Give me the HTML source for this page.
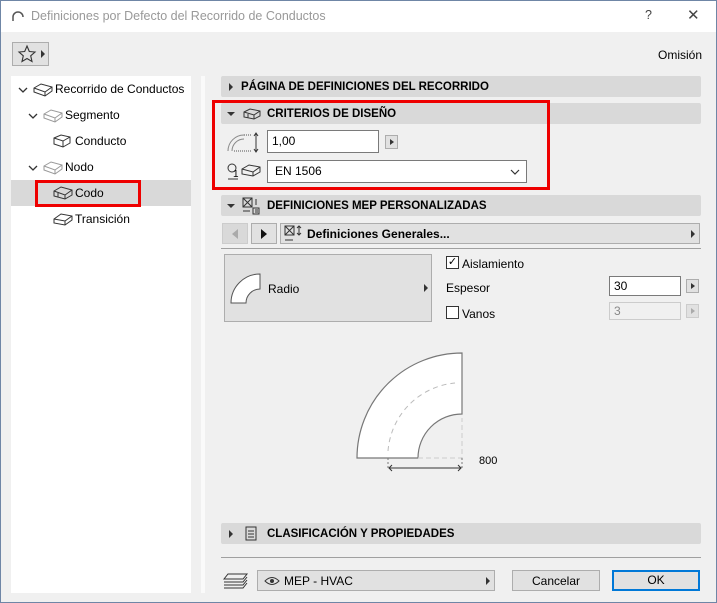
<!DOCTYPE html>
<html><head><meta charset="utf-8"><style>
*{box-sizing:border-box;margin:0;padding:0}
body{width:717px;height:603px;overflow:hidden;font-family:"Liberation Sans",sans-serif;font-size:12px;color:#000;background:#f0f0f0;position:relative}
.a{position:absolute}
.win{left:0;top:0;width:717px;height:603px;border:1px solid #6f86a6;background:#f0f0f0}
.title{left:1px;top:1px;width:715px;height:31px;background:#fff;color:#999;font-size:12.5px}
.hdr{background:#d9d9d9;border-radius:2px;height:21px;font-weight:bold;font-size:11.5px;line-height:23px}
.tri{display:inline-block;width:0;height:0}
.inp{background:#fff;border:1px solid #7a7a7a;height:23px;line-height:21px;padding-left:4px;font-size:12px}
.sb{width:13px;height:14px;background:#e1e1e1;border:1px solid #adadad}
.btn{background:#e1e1e1;border:1px solid #adadad;text-align:center;line-height:20px}
.tree div{position:absolute;font-size:12px}
.chev{position:absolute}
</style></head><body>
<div class="a win"></div>
<div class="a title">
 <svg class="a" style="left:10px;top:9px" width="14" height="12"><path d="M2 11 V7 A5 5 0 0 1 12 7" fill="none" stroke="#555" stroke-width="1.5"/></svg>
 <div class="a" style="left:30px;top:8px">Definiciones por Defecto del Recorrido de Conductos</div>
 <div class="a" style="left:644px;top:7px;color:#444">?</div>
 <div class="a" style="left:686px;top:5px;color:#444;font-size:15px">✕</div>
</div>
<div class="a" style="left:12px;top:42px;width:37px;height:24px;border:1px solid #adadad;background:#e1e1e1"></div>
<svg class="a" style="left:17px;top:44px" width="20" height="20"><path d="M10 2 L12.3 7.5 L18 8 L13.7 11.8 L15 17.5 L10 14.5 L5 17.5 L6.3 11.8 L2 8 L7.7 7.5 Z" fill="none" stroke="#333" stroke-width="1.1"/></svg>
<div class="a tri" style="left:41px;top:50px;border-left:4px solid #333;border-top:4px solid transparent;border-bottom:4px solid transparent"></div>
<div class="a" style="left:658px;top:48px">Omisión</div>

<div class="a tree" style="left:11px;top:76px;width:180px;height:517px;background:#fff">
 <svg class="chev" style="left:7px;top:11px" width="10" height="6"><path d="M1 1 L5 5 L9 1" fill="none" stroke="#333" stroke-width="1.3"/></svg>
 <svg class="a" style="left:22px;top:7px" width="20" height="14"><path d="M1 5 L8 1 L19 4 L19 8 L12 13 L1 9 Z M1 5 L12 9 L19 4 M12 9 V13" fill="none" stroke="#333"/></svg>
 <div style="left:44px;top:6px">Recorrido de Conductos</div>
 <svg class="chev" style="left:17px;top:37px" width="10" height="6"><path d="M1 1 L5 5 L9 1" fill="none" stroke="#333" stroke-width="1.3"/></svg>
 <svg class="a" style="left:32px;top:33px" width="20" height="14"><path d="M1 5 L8 1 L19 4 L19 8 L12 13 L1 9 Z M1 5 L12 9 L19 4 M12 9 V13" fill="none" stroke="#999"/></svg>
 <div style="left:54px;top:32px">Segmento</div>
 <svg class="a" style="left:42px;top:58px" width="20" height="14"><path d="M1 4 L8 1 L17 3 L17 9 L10 13 L1 10 Z M1 4 L10 7 L17 3 M10 7 V13" fill="none" stroke="#333"/></svg>
 <div style="left:64px;top:58px">Conducto</div>
 <svg class="chev" style="left:17px;top:89px" width="10" height="6"><path d="M1 1 L5 5 L9 1" fill="none" stroke="#333" stroke-width="1.3"/></svg>
 <svg class="a" style="left:32px;top:85px" width="20" height="14"><path d="M1 5 L8 1 L19 4 L19 8 L12 13 L1 9 Z M1 5 L12 9 L19 4 M12 9 V13" fill="none" stroke="#999"/></svg>
 <div style="left:54px;top:84px">Nodo</div>
 <div style="left:0;top:104px;width:180px;height:26px;background:#d9d9d9"></div>
 <div style="left:24px;top:104px;width:106px;height:27px;border:3px solid #e00"></div>
 <svg class="a" style="left:42px;top:110px" width="20" height="14"><path d="M1 5 L8 1 L19 4 L19 9 L12 13 L1 10 Z M1 5 L12 9 L19 4 M12 9 V13 M5 7 V11" fill="none" stroke="#333"/></svg>
 <div style="left:64px;top:110px">Codo</div>
 <svg class="a" style="left:42px;top:136px" width="20" height="14"><path d="M1 7 L8 2 L19 4 L19 8 L12 13 L1 11 Z M1 7 L12 9 L19 4 M12 9 V13" fill="none" stroke="#333"/></svg>
 <div style="left:64px;top:136px">Transición</div>
</div>
<div class="a" style="left:201px;top:76px;width:4px;height:517px;background:#fafafa"></div>

<div class="a hdr" style="left:221px;top:76px;width:480px"><span class="a tri" style="left:8px;top:7px;border-left:4px solid #333;border-top:4px solid transparent;border-bottom:4px solid transparent"></span><span class="a" style="left:20px">PÁGINA DE DEFINICIONES DEL RECORRIDO</span></div>
<div class="a hdr" style="left:221px;top:103px;width:480px"><span class="a tri" style="left:6px;top:9px;border-top:4px solid #333;border-left:4px solid transparent;border-right:4px solid transparent"></span>
 <svg class="a" style="left:22px;top:5px" width="18" height="12"><path d="M1 4 L7 1 L17 3 L17 8 L11 11 L1 9 Z M1 4 L11 7 L17 3 M11 7 V11 M5 6 V10" fill="none" stroke="#333"/></svg>
 <span class="a" style="left:46px">CRITERIOS DE DISEÑO</span></div>
<svg class="a" style="left:226px;top:131px" width="34" height="22"><path d="M2 20 A16 16 0 0 1 18 4 M6 20 A12 12 0 0 1 18 8" fill="none" stroke="#888"/><path d="M18 4 H26 M8 20 H26" stroke="#555" stroke-dasharray="1 1"/><path d="M30 3 V20 M28 5 L30 2 L32 5 M28 18 L30 21 L32 18" fill="none" stroke="#333"/></svg>
<div class="a inp" style="left:267px;top:130px;width:112px">1,00</div>
<div class="a sb" style="left:385px;top:135px"><span class="a tri" style="left:4px;top:3px;border-left:4px solid #333;border-top:3.5px solid transparent;border-bottom:3.5px solid transparent"></span></div>
<svg class="a" style="left:225px;top:161px" width="38" height="20"><circle cx="7" cy="7" r="4" fill="none" stroke="#333"/><text x="8" y="16" font-size="10" font-family="Liberation Sans">1</text><path d="M3 18 H13" stroke="#333"/><path d="M17 8 L24 4 L35 6 L35 11 L28 15 L17 13 Z M17 8 L28 11 L35 6 M28 11 V15" fill="none" stroke="#333"/></svg>
<div class="a inp" style="left:267px;top:160px;width:260px;padding-left:7px">EN 1506<svg class="a" style="right:6px;top:8px" width="10" height="6"><path d="M1 1 L5 5 L9 1" fill="none" stroke="#333" stroke-width="1.2"/></svg></div>
<div class="a" style="left:212px;top:100px;width:338px;height:90px;border:3px solid #e00"></div>

<div class="a hdr" style="left:221px;top:195px;width:480px"><span class="a tri" style="left:6px;top:9px;border-top:4px solid #333;border-left:4px solid transparent;border-right:4px solid transparent"></span>
 <svg class="a" style="left:21px;top:2px" width="18" height="18"><rect x="1" y="1" width="9" height="9" fill="none" stroke="#333"/><path d="M1 1 L10 10 M10 1 L1 10 M11 11 H17 V17 H11 Z M13 13 H16 M13 15 H16 M14 2 V8 M1 14 H8" stroke="#333" fill="none"/></svg>
 <span class="a" style="left:46px">DEFINICIONES MEP PERSONALIZADAS</span></div>
<div class="a" style="left:222px;top:223px;width:26px;height:21px;background:#d9d9d9;border:1px solid #ccc"><span class="a tri" style="left:9px;top:5px;border-right:6px solid #aaa;border-top:5px solid transparent;border-bottom:5px solid transparent"></span></div>
<div class="a btn" style="left:251px;top:223px;width:26px;height:21px"><span class="a tri" style="left:9px;top:5px;border-left:6px solid #111;border-top:5px solid transparent;border-bottom:5px solid transparent"></span></div>
<div class="a btn" style="left:280px;top:223px;width:420px;height:21px;text-align:left">
 <svg class="a" style="left:3px;top:1px" width="18" height="18"><rect x="1" y="1" width="9" height="9" fill="none" stroke="#333"/><path d="M1 1 L10 10 M10 1 L1 10 M15 1 V10 M13 3 L15 1 L17 3 M13 8 L15 10 L17 8 M1 15 H9" stroke="#333" fill="none"/></svg>
 <b class="a" style="left:26px;top:0;font-size:12px">Definiciones Generales...</b>
 <span class="a tri" style="right:4px;top:6px;border-left:4px solid #333;border-top:4px solid transparent;border-bottom:4px solid transparent"></span></div>
<div class="a" style="left:221px;top:248px;width:480px;height:1px;background:#a0a0a0"></div>
<div class="a btn" style="left:224px;top:254px;width:208px;height:68px"></div>
<svg class="a" style="left:230px;top:272px" width="32" height="32"><path d="M1 31 A29 29 0 0 1 30 2 V17 A14 14 0 0 0 16 31 Z" fill="#fff" stroke="#555"/></svg>
<div class="a" style="left:268px;top:282px">Radio</div>
<span class="a tri" style="left:424px;top:284px;border-left:4px solid #333;border-top:4px solid transparent;border-bottom:4px solid transparent"></span>
<div class="a" style="left:446px;top:256px;width:13px;height:13px;border:1px solid #333;background:#fff;font-size:11px;line-height:11px;text-align:center">✓</div>
<div class="a" style="left:462px;top:257px">Aislamiento</div>
<div class="a" style="left:446px;top:281px">Espesor</div>
<div class="a inp" style="left:609px;top:276px;width:72px;height:20px;line-height:18px">30</div>
<div class="a sb" style="left:686px;top:279px"><span class="a tri" style="left:4px;top:3px;border-left:4px solid #333;border-top:3.5px solid transparent;border-bottom:3.5px solid transparent"></span></div>
<div class="a" style="left:446px;top:306px;width:13px;height:13px;border:1px solid #333;background:#fff"></div>
<div class="a" style="left:462px;top:307px">Vanos</div>
<div class="a inp" style="left:609px;top:302px;width:72px;height:18px;line-height:16px;border-color:#ccc;background:#f0f0f0;color:#888">3</div>
<div class="a sb" style="left:686px;top:304px;border-color:#ccc"><span class="a tri" style="left:4px;top:3px;border-left:4px solid #aaa;border-top:3.5px solid transparent;border-bottom:3.5px solid transparent"></span></div>

<svg class="a" style="left:340px;top:340px" width="180" height="140">
 <path d="M17 118 A105 105 0 0 1 122 13 V74 A44 44 0 0 0 78 118 Z" fill="#fff" stroke="#777" stroke-width="1.2"/>
 <path d="M48 111 A74 74 0 0 1 115 43" fill="none" stroke="#bbb" stroke-dasharray="5 4"/>
 <path d="M78 118 H122 V78" fill="none" stroke="#ccc" stroke-dasharray="5 3"/>
 <path d="M48 118 V130 M122 118 V130" stroke="#777" stroke-dasharray="2 2"/>
 <path d="M49 128 H121 M52 125 L49 128 L52 131 M118 125 L121 128 L118 131" fill="none" stroke="#333"/>
 <text x="139" y="124" font-size="11" font-family="Liberation Sans" fill="#000">800</text>
</svg>

<div class="a hdr" style="left:221px;top:523px;width:480px"><span class="a tri" style="left:8px;top:7px;border-left:4px solid #333;border-top:4px solid transparent;border-bottom:4px solid transparent"></span>
 <svg class="a" style="left:24px;top:3px" width="12" height="15"><rect x="1" y="1" width="10" height="13" fill="none" stroke="#333"/><path d="M3 5 H9 M3 8 H9 M3 11 H9" stroke="#333"/></svg>
 <span class="a" style="left:46px">CLASIFICACIÓN Y PROPIEDADES</span></div>
<div class="a" style="left:221px;top:557px;width:480px;height:1px;background:#a0a0a0"></div>
<svg class="a" style="left:223px;top:571px" width="26" height="18"><path d="M5 3 H24 L20 8 H1 Z M1 11 H20 L24 6 M1 14 H20 L24 9 M1 17 H20 L24 12" fill="none" stroke="#333"/></svg>
<div class="a btn" style="left:257px;top:570px;width:238px;height:21px;text-align:left">
 <svg class="a" style="left:6px;top:5px" width="16" height="10"><path d="M1 5 Q8 -2 15 5 Q8 12 1 5 Z" fill="none" stroke="#333"/><circle cx="8" cy="5" r="2" fill="#333"/></svg>
 <span class="a" style="left:26px;top:0">MEP - HVAC</span>
 <span class="a tri" style="right:4px;top:6px;border-left:4px solid #333;border-top:4px solid transparent;border-bottom:4px solid transparent"></span></div>
<div class="a btn" style="left:512px;top:570px;width:88px;height:21px">Cancelar</div>
<div class="a btn" style="left:612px;top:570px;width:88px;height:21px;border:2px solid #0078d7;line-height:17px">OK</div>
</body></html>
